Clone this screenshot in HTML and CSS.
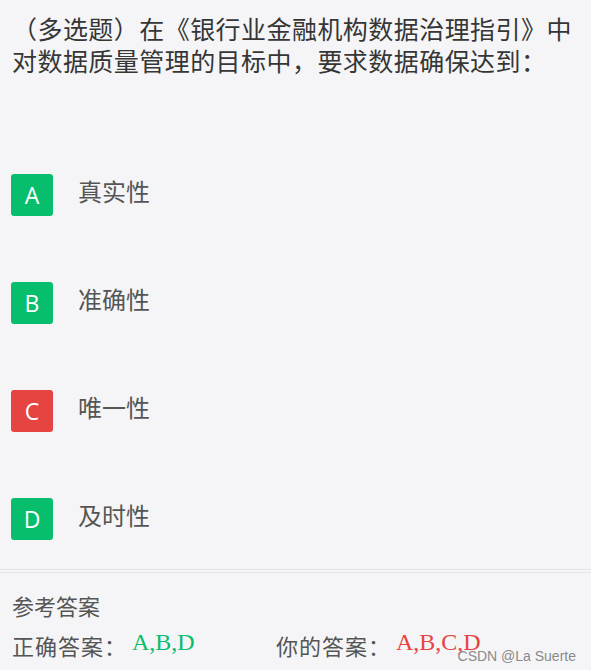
FILE: index.html
```html
<!DOCTYPE html>
<html>
<head>
<meta charset="utf-8">
<link rel="stylesheet" href="styles.css">
<title>多选题</title>
</head>
<body>
  <div id="main">
    <div class="question">（多选题）在《银行业金融机构数据治理指引》中对数据质量管理的目标中，要求数据确保达到：</div>

    <div class="options">
      <div class="option">
        <span class="badge badge_right">A</span>
        <span class="option_text">真实性</span>
      </div>
      <div class="option">
        <span class="badge badge_right">B</span>
        <span class="option_text">准确性</span>
      </div>
      <div class="option">
        <span class="badge badge_wrong">C</span>
        <span class="option_text">唯一性</span>
      </div>
      <div class="option">
        <span class="badge badge_right">D</span>
        <span class="option_text">及时性</span>
      </div>
    </div>

    <div class="answer_box">
      <div class="answer_title">参考答案</div>
      <div class="answer_row">
        <div class="answer_item">正确答案：<span class="answer_value right">A,B,D</span></div>
        <div class="answer_item">你的答案：<span class="answer_value wrong">A,B,C,D</span></div>
      </div>
      <span class="watermark">CSDN @La Suerte</span>
    </div>
  </div>
</body>
</html>
```

FILE: styles.css
```css
body {
  margin: 0;
  background-color: #f5f5f7;
  font-family: "Noto Sans CJK SC", "Noto Sans", sans-serif;
  color: #3c3c3c;
}

#main {
  position: relative;
  height: 670px;
  overflow: hidden;
}

.question {
  padding: 12px 12px 0 12px;
  font-size: 25px;
  line-height: 32px;
  letter-spacing: 0.45px;
  color: #363636;
}

.options {
  display: flex;
  flex-direction: column;
  gap: 66px;
  padding: 0 11px 29px 11px;
  margin-top: 98px;
}

.option {
  display: flex;
  align-items: center;
  gap: 25px;
}

.badge {
  display: flex;
  align-items: center;
  justify-content: center;
  width: 42px;
  height: 42px;
  border-radius: 3px;
  color: white;
  font-family: "Open Sans", "Noto Sans", sans-serif;
  font-size: 23px;
}

.badge_right {
  background-color: #07be6c;
}

.badge_wrong {
  background-color: #e64440;
}

.option_text {
  font-size: 24px;
  line-height: 30px;
  margin-bottom: 9px;
  color: #555555;
}

.answer_box {
  border-top: 4px double #e4e4ea;
  padding: 17px 12px 0 12px;
  color: #555555;
}

.answer_title {
  font-size: 22px;
  line-height: 30px;
}

.answer_row {
  display: grid;
  grid-template-columns: 264px 1fr;
  margin-top: 7px;
  font-size: 22px;
  line-height: 30px;
  letter-spacing: 1px;
}

.answer_value {
  font-family: "Liberation Serif", serif;
  font-size: 24px;
  letter-spacing: 0;
  margin-left: 5px;
  vertical-align: 5px;
}

.right {
  color: #07be6c;
}

.wrong {
  color: #e64440;
}

.watermark {
  position: absolute;
  right: 15px;
  bottom: 6px;
  font-family: "Liberation Sans", Arial, sans-serif;
  font-size: 14px;
  color: #8a8a8a;
}
```
